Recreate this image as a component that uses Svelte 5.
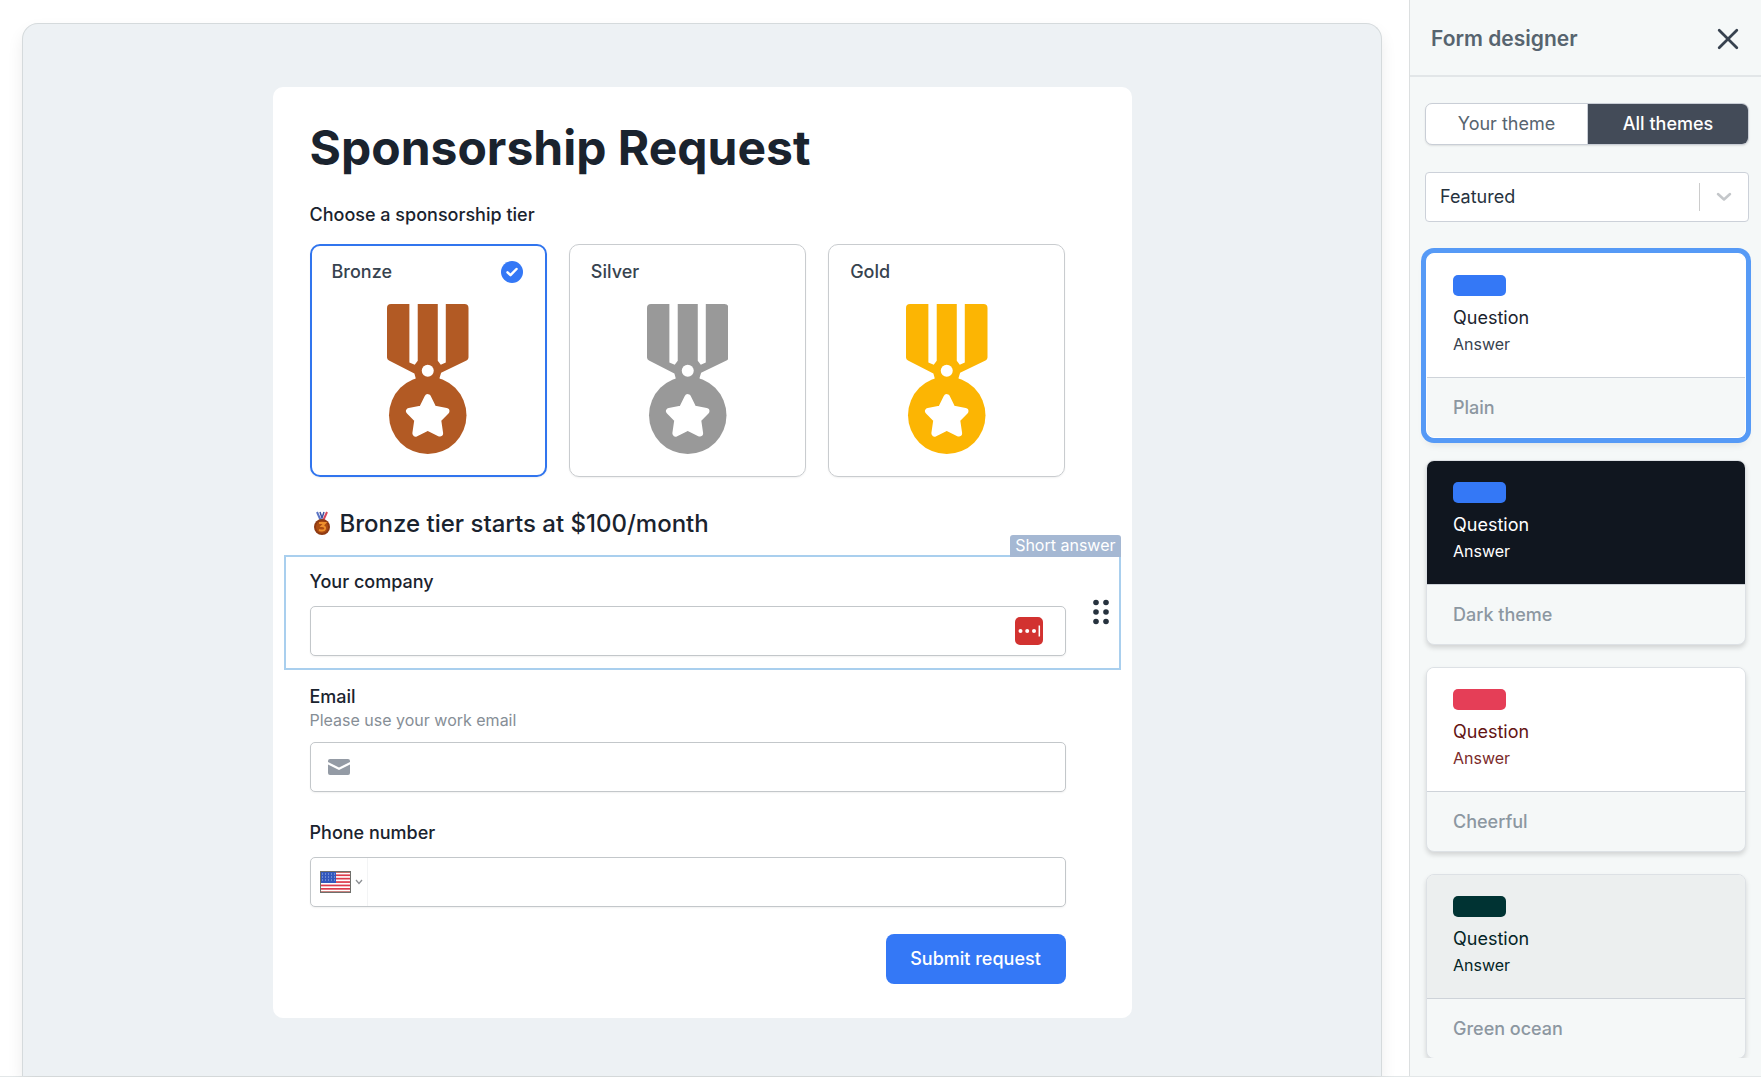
<script lang="ts">
  type Tier = { id: string; name: string; color: string };
  type Theme = { id: string; name: string };

  const tiers: Tier[] = [
    { id: "bronze", name: "Bronze", color: "#b25a24" },
    { id: "silver", name: "Silver", color: "#999999" },
    { id: "gold", name: "Gold", color: "#fcb503" },
  ];

  const themes: Theme[] = [
    { id: "plain", name: "Plain" },
    { id: "dark", name: "Dark theme" },
    { id: "cheerful", name: "Cheerful" },
    { id: "ocean", name: "Green ocean" },
  ];

  let tier = $state("bronze");
  let theme = $state("plain");
  let tab = $state("all");
  let company = $state("");
  let email = $state("");
  let phone = $state("");
</script>

<svelte:head><title>Form designer</title></svelte:head>

<div class="app">
  <main>
    <div class="canvas">
      <form class="sheet" onsubmit={(e) => e.preventDefault()}>
        <h1>Sponsorship Request</h1>

        <fieldset class="block">
          <legend>Choose a sponsorship tier</legend>
          <div class="tiers">
            {#each tiers as item}
              <label class="tier" class:selected={tier === item.id}>
                <span class="tier-head">
                  {item.name}
                  <span class="mark">
                    <input type="radio" name="tier" value={item.id} bind:group={tier} />
                    {#if tier === item.id}
                      <svg viewBox="0 0 22 22" aria-hidden="true"><path d="M6.5 11.3 9.5 14.2 15.5 8" /></svg>
                    {/if}
                  </span>
                </span>
                <svg class="medal" viewBox="0 0 244 449" fill={item.color} aria-hidden="true">
                  <path d="M12 0H67V175L83 182L92 170V0H152V170L161 182L176 175V0H232Q244 0 244 12V160Q244 166 238 169L162 206L157 222L162 240H81L86 222L82 208L6 169Q0 166 0 160V12Q0 0 12 0Z" />
                  <circle cx="122" cy="333" r="116" />
                  <circle cx="122" cy="200" r="18" fill="#fff" />
                  <path class="star" d="M122 280 139 314 177 321 152 346 158 387 122 369 86 387 92 346 67 321 105 314Z" />
                </svg>
              </label>
            {/each}
          </div>
        </fieldset>

        <div class="block note">
          <h2>
            <svg viewBox="0 0 18 26" aria-hidden="true">
              <path d="M4 1 8 10" stroke="#5b74c4" stroke-width="2" />
              <path d="M14 1 10 10" stroke="#d8475c" stroke-width="2" />
              <path d="M7 1 9 7 11 1" fill="none" stroke="#3e4f9e" stroke-width="1.5" />
              <circle cx="9" cy="16" r="8" fill="#8f3a12" />
              <circle cx="9" cy="16" r="6" fill="#ad4d12" />
              <path d="M6 12H12L9 15Q12.500 15 12 18Q11 20.500 6 19" fill="none" stroke="#ee8f2c" stroke-width="2" />
            </svg>
            Bronze tier starts at $100/month
          </h2>
        </div>

        <div class="block active">
          <span class="tag">Short answer</span>
          <label for="company">Your company</label>
          <div class="field">
            <input id="company" type="text" bind:value={company} />
            <button type="button" class="filler" aria-label="Fill with password manager">
              <svg viewBox="0 0 28 28" aria-hidden="true">
                <rect width="28" height="28" rx="5" fill="#d23230" />
                <circle cx="5.500" cy="14" r="2" fill="#fff" />
                <circle cx="12.200" cy="14" r="2" fill="#fff" />
                <circle cx="19" cy="14" r="2" fill="#fff" />
                <path d="M24.300 8.500V19.500" stroke="#fff" stroke-width="1.500" />
              </svg>
            </button>
          </div>
          <button type="button" class="grip" aria-label="Move block">
            <svg viewBox="0 0 18 26" fill="#26323e" aria-hidden="true">
              {#each [3.5, 13, 22.5] as y}
                <circle cx="4" cy={y} r="2.800" />
                <circle cx="14" cy={y} r="2.800" />
              {/each}
            </svg>
          </button>
        </div>

        <div class="block">
          <label for="email">Email</label>
          <p class="hint" id="email-hint">Please use your work email</p>
          <div class="field">
            <svg class="mail" viewBox="0 0 22 16" aria-hidden="true">
              <path d="M0 3V2Q0 0 2 0H20Q22 0 22 2V3L11 8.500Z" />
              <path d="M0 5.500 11 11 22 5.500V14Q22 16 20 16H2Q0 16 0 14Z" />
            </svg>
            <input id="email" type="email" aria-describedby="email-hint" bind:value={email} />
          </div>
        </div>

        <div class="block">
          <label for="phone">Phone number</label>
          <div class="field">
            <button type="button" class="country" aria-label="Country: United States">
              <svg class="flag" viewBox="0 0 31 22" aria-hidden="true">
                <rect width="31" height="22" fill="#fff" />
                {#each [0, 1, 2, 3, 4, 5, 6] as n}
                  <rect y={n * 3.4} width="31" height="1.700" fill={n === 0 || n === 6 ? "#a8322c" : "#dd3b4c"} />
                {/each}
                <rect width="16" height="12" fill="#3358bd" />
                {#each [3, 6, 9] as y}
                  <path d={`M2 ${y}H15`} stroke="#a9bce8" stroke-dasharray="1 2" />
                {/each}
                <rect x="0.500" y="0.500" width="30" height="21" fill="none" stroke="#6f6f6b" />
              </svg>
              <svg class="caret" viewBox="0 0 8 6" aria-hidden="true"><path d="M1 1 4 4.500 7 1" /></svg>
            </button>
            <input id="phone" type="tel" bind:value={phone} />
          </div>
        </div>

        <div class="actions">
          <button type="submit">Submit request</button>
        </div>
      </form>
    </div>
  </main>

  <aside>
    <header>
      <h2>Form designer</h2>
      <button type="button" aria-label="Close">
        <svg viewBox="0 0 20 20" aria-hidden="true"><path d="M2 2 18 18M18 2 2 18" /></svg>
      </button>
    </header>

    <div class="controls">
      <div class="tabs">
        <button type="button" aria-pressed={tab === "yours"} onclick={() => (tab = "yours")}>Your theme</button>
        <button type="button" aria-pressed={tab === "all"} onclick={() => (tab = "all")}>All themes</button>
      </div>
      <div class="picker">
        <select aria-label="Theme category">
          <option>Featured</option>
        </select>
        <svg viewBox="0 0 16 10" aria-hidden="true"><path d="M2 2 8 7.500 14 2" /></svg>
      </div>
    </div>

    <div class="themes">
      {#each themes as item}
        <button type="button" class="theme {item.id}" aria-pressed={theme === item.id} onclick={() => (theme = item.id)}>
          <span class="preview">
            <span class="swatch"></span>
            <span class="question">Question</span>
            <span class="answer">Answer</span>
          </span>
          <span class="name">{item.name}</span>
        </button>
      {/each}
    </div>
  </aside>
</div>

<style>
  :global(body) { margin: 0; background: #fff; }
  .app, .app * { box-sizing: border-box; }
  .app { display: flex; min-height: 100vh; border-bottom: 1px solid #e3e7e8; color: #1a232e; font: 400 18px/22px Inter, "Liberation Sans", sans-serif; }
  button { padding: 0; border: 0; background: none; color: inherit; font: inherit; cursor: pointer; }
  h1, h2, p { margin: 0; }
  svg { display: block; }

  main { display: flex; flex: 1; min-width: 0; padding: 23px 27px 0 22px; }
  .canvas { flex: 1; min-width: 0; padding: 63px 24px 58px; border: 1px solid #d5dadc; border-bottom: 0; border-radius: 16px 16px 0 0; background: #edf1f4; box-shadow: 0 8px 16px rgba(0,0,0,.08); }
  .sheet { max-width: 859px; margin: 0 auto; padding: 32px 11px 34px; border-radius: 10px; background: #fff; }
  h1 { padding: 0 26px 11px; font-size: 48px; line-height: 58px; font-weight: 700; }

  .block { position: relative; min-width: 0; margin: 0; padding: 14px 53px 12px 24px; border: 2px solid transparent; }
  .block > label, legend { display: block; margin-bottom: 13px; padding: 0; font-weight: 500; }
  legend { float: left; width: 100%; margin-bottom: 18px; }
  .active { border-color: #a9cfee; }
  .tag { position: absolute; right: -2px; bottom: 100%; padding: 0 5px 2px; border-radius: 3px 3px 0 0; background: #a5b8d3; color: #fff; font-size: 16px; line-height: 20px; }
  .block > .hint { margin: -11px 0 12px; color: #868e96; font-size: 16px; line-height: 20px; }

  .tiers { display: grid; grid-template-columns: repeat(3, 1fr); gap: 22px; clear: both; }
  .tier { display: flex; flex-direction: column; align-items: center; height: 233px; padding: 15px 21px 0; border: 1px solid #c9cccf; border-radius: 10px; color: #37434f; font-weight: 500; box-shadow: 0 1px 2px rgba(0,0,0,.06); cursor: pointer; }
  .selected { padding: 14px 20px 0; border: 2px solid #3175ee; }
  .tier-head { display: flex; justify-content: space-between; align-items: center; width: 100%; height: 24px; }
  .mark { display: grid; margin-right: 2px; }
  .mark > * { grid-area: 1 / 1; width: 22px; height: 22px; margin: 0; }
  .mark input { appearance: none; border-radius: 50%; }
  .mark input:checked { background: #3478f6; }
  .mark svg { fill: none; stroke: #fff; stroke-width: 2.5; stroke-linecap: round; stroke-linejoin: round; pointer-events: none; }
  .medal { height: 150px; margin-top: 20px; }
  .star { fill: #fff; stroke: #fff; stroke-width: 20; stroke-linejoin: round; }

  .note { padding-top: 16px; padding-bottom: 14px; }
  .note h2 { display: flex; align-items: center; gap: 9px; padding-left: 3px; font-size: 24px; line-height: 30px; font-weight: 500; }
  .note svg { width: 18px; height: 26px; }

  .field { display: flex; align-items: center; height: 50px; border: 1px solid #c3c7ca; border-radius: 5px; background: #fff; box-shadow: 0 1px 2px rgba(0,0,0,.06); }
  .field input { flex: 1; min-width: 0; height: 100%; padding: 0 16px; border: 0; outline: 0; background: none; color: inherit; font: inherit; }
  .filler { width: 28px; height: 28px; margin-right: 22px; }
  .mail { width: 22px; height: 16px; margin-left: 17px; fill: #949ba5; }
  .country { display: flex; align-items: center; gap: 4px; align-self: stretch; width: 57px; padding-left: 9px; border-right: 1px solid #f3f4f5; }
  .flag { width: 31px; height: 22px; }
  .caret { width: 8px; height: 6px; fill: none; stroke: #8d9094; stroke-width: 1.3; }
  .grip { position: absolute; right: 9px; top: 42px; width: 18px; height: 26px; }

  .actions { display: flex; justify-content: flex-end; padding: 13px 55px 0 26px; }
  .actions button { min-width: 180px; height: 50px; padding: 0 23px; border-radius: 8px; background: #3478f6; color: #fff; font-weight: 500; }

  aside { position: sticky; top: 0; display: flex; flex-direction: column; flex: none; width: 352px; height: calc(100vh - 1px); padding-bottom: 18px; border-left: 1px solid #dcdfe0; background: #f5f8f8; }
  header { display: flex; justify-content: space-between; align-items: center; height: 77px; padding: 2px 22px 0 21px; border-bottom: 2px solid #e2e6e8; }
  header h2 { color: #57646f; font-size: 21px; line-height: 26px; font-weight: 600; }
  header button svg { width: 22px; height: 22px; fill: none; stroke: #37424f; stroke-width: 2.5; stroke-linecap: round; }
  .controls { display: grid; gap: 27px; padding: 26px 12px 0 15px; }
  .tabs { display: grid; grid-template-columns: 1fr 1fr; height: 42px; overflow: hidden; border: 1px solid #c9ced6; border-radius: 7px; background: #fff; color: #57646f; box-shadow: 0 1px 2px rgba(0,0,0,.1); }
  .tabs button + button { border-left: 1px solid #c9ced6; }
  .tabs [aria-pressed="true"] { background: #434b58; color: #fff; font-weight: 500; }
  .picker { display: grid; align-items: center; height: 50px; border: 1px solid #ccd1d9; border-radius: 4px; background: #fff; }
  .picker > * { grid-area: 1 / 1; }
  .picker select { height: 100%; padding: 0 64px 0 14px; appearance: none; border: 0; background: none; color: #26323e; font: inherit; }
  .picker svg { justify-self: end; width: 49px; height: 28px; padding: 9px 16px; border-left: 1px solid #ccc; fill: none; stroke: #c4c7ca; stroke-width: 2.5; stroke-linecap: round; stroke-linejoin: round; pointer-events: none; }

  .themes { display: flex; flex: 1; flex-direction: column; gap: 22px; min-height: 0; padding: 31px 15px 22px 16px; overflow-y: auto; scrollbar-width: none; }
  .theme { flex: none; overflow: hidden; border: 1px solid #dde1e5; border-radius: 8px; background: #f5f8f8; text-align: left; box-shadow: 0 3px 5px rgba(0,0,0,.14); }
  .theme[aria-pressed="true"] { border-color: #fff; box-shadow: 0 0 0 5px #569af6, 0 6px 8px rgba(0,0,0,.1); }
  .preview { display: flex; flex-direction: column; height: 124px; padding: 21px 26px 0; border-bottom: 1px solid #ced3d9; background: #fff; }
  .swatch { width: 53px; height: 21px; margin-bottom: 11px; border-radius: 5px; background: #3478f6; }
  .question { margin-bottom: 5px; }
  .answer { color: #37424f; font-size: 16px; line-height: 20px; }
  .name { display: block; padding: 19px 26px 18px; color: #8c97a1; font-weight: 500; }
  .dark .preview { background: #10161f; color: #fff; }
  .dark .answer { color: #fff; }
  .cheerful .swatch { background: #e53e57; }
  .cheerful .question { color: #631414; }
  .cheerful .answer { color: #7b2b2b; }
  .ocean .preview { background: #ecefef; color: #032426; }
  .ocean .swatch { background: #003333; }
  .ocean .answer { color: #032426; }
</style>
